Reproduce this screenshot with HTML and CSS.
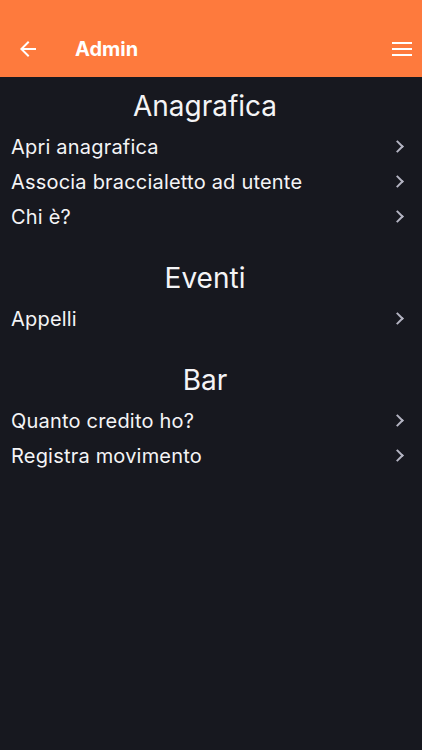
FILE: index.html
```html
<!DOCTYPE html>
<html lang="it">
<head>
    <meta charset="UTF-8">
    <meta name="viewport" content="width=device-width, initial-scale=1.0">
    <title>Admin</title>
    <link rel="stylesheet" href="styles.css">
</head>
<body>
    <header class="toolbar">
        <button class="icon-btn back" aria-label="Indietro">
            <svg width="24" height="24" viewBox="0 0 24 24"><path d="M20 11H7.83l5.59-5.59L12 4l-8 8 8 8 1.41-1.41L7.83 13H20v-2z" fill="#fff"/></svg>
        </button>
        <div class="title">Admin</div>
        <button class="icon-btn menu" aria-label="Menu">
            <svg width="20" height="16" viewBox="0 0 20 16"><rect x="0" y="1" width="20" height="2" fill="#fff"/><rect x="0" y="7" width="20" height="2" fill="#fff"/><rect x="0" y="13" width="20" height="2" fill="#fff"/></svg>
        </button>
    </header>

    <main class="content">
        <section class="group">
            <h2>Anagrafica</h2>
            <a class="item" href="#"><span>Apri anagrafica</span><i class="chev"></i></a>
            <a class="item" href="#"><span>Associa braccialetto ad utente</span><i class="chev"></i></a>
            <a class="item" href="#"><span>Chi è?</span><i class="chev"></i></a>
        </section>
        <section class="group">
            <h2>Eventi</h2>
            <a class="item" href="#"><span>Appelli</span><i class="chev"></i></a>
        </section>
        <section class="group">
            <h2>Bar</h2>
            <a class="item" href="#"><span>Quanto credito ho?</span><i class="chev"></i></a>
            <a class="item" href="#"><span>Registra movimento</span><i class="chev"></i></a>
        </section>
    </main>
</body>
</html>
```

FILE: styles.css
```css
body {
    margin: 0;
    min-height: 750px;
    background: #17181f;
    color: #f4f4f6;
    font-family: Inter, "Noto Sans", sans-serif;
}
.toolbar {
    height: 77px;
    background: #fe7a3d;
    display: flex;
    align-items: center;
    padding: 20px 10px 0 16px;
    box-sizing: border-box;
}
.icon-btn {
    background: none;
    border: 0;
    padding: 0;
    display: flex;
    align-items: center;
    cursor: pointer;
}
.title {
    flex: 1;
    margin-left: 35px;
    font-size: 20px;
    font-weight: 700;
    color: #fff;
}
.group {
    margin-top: 21px;
}
.group:first-child {
    margin-top: 6px;
}
.group h2 {
    margin: 0;
    height: 46px;
    line-height: 46px;
    padding-right: 12px;
    text-align: center;
    font-size: 28px;
    font-weight: 400;
}
.item {
    display: flex;
    align-items: center;
    justify-content: space-between;
    height: 35px;
    padding: 0 20px 0 11px;
    color: inherit;
    text-decoration: none;
    font-size: 20px;
    letter-spacing: 0.2px;
}
.chev {
    width: 7px;
    height: 7px;
    border-right: 2px solid #b4b4c2;
    border-bottom: 2px solid #b4b4c2;
    transform: rotate(-45deg);
}
```
